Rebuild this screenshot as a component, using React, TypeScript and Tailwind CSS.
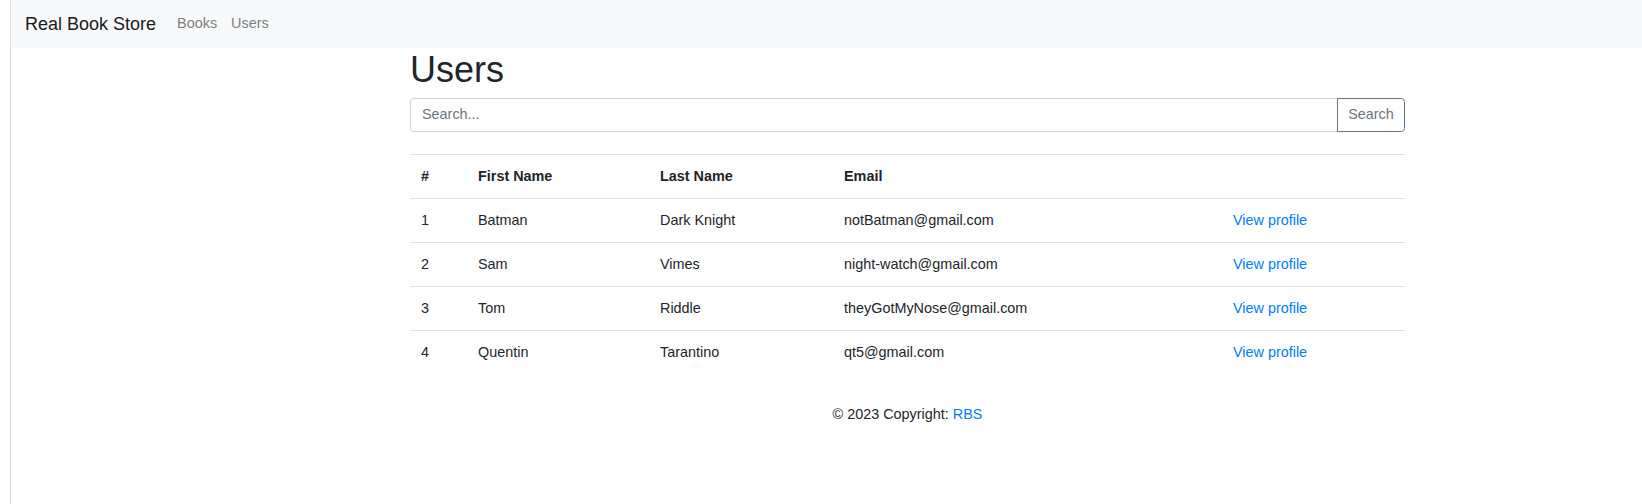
const users = [
    { id: 1, first: 'Batman', last: 'Dark Knight', email: 'notBatman@gmail.com' },
    { id: 2, first: 'Sam', last: 'Vimes', email: 'night-watch@gmail.com' },
    { id: 3, first: 'Tom', last: 'Riddle', email: 'theyGotMyNose@gmail.com' },
    { id: 4, first: 'Quentin', last: 'Tarantino', email: 'qt5@gmail.com' },
]

const Navbar = () => {
    return (
        <nav className="h-[48px] bg-[#f8f9fa] flex items-center pl-[14px]">
            <a className="text-[18px] text-[#1a1a1a] mr-[14px]">Real Book Store</a>
            <a className="text-[14.4px] text-[#808080] px-[7px]">Books</a>
            <a className="text-[14.4px] text-[#808080] px-[7px]">Users</a>
        </nav>
    )
}

const App = () => {
    return (
        <div
            className="flex min-h-[504px] bg-white text-[#212529]"
            style={{ fontFamily: '"Liberation Sans", Arial, sans-serif' }}
        >
            <div className="w-[11px] shrink-0 border-r border-[#dadada]"></div>
            <div className="flex-1">
                <Navbar />
                <div className="pl-[399px]">
                    <div className="w-[995px]">
                        <h1 className="text-[36px] leading-[43px] mb-[7px]">Users</h1>
                        <div className="flex h-[34px]">
                            <input
                                className="flex-1 border border-[#ced4da] rounded-l-[3.6px] px-[11px] text-[14.4px] placeholder:text-[#6c757d] outline-none"
                                placeholder="Search..."
                            />
                            <button className="w-[68px] border border-[#6c757d] rounded-r-[3.6px] text-[14.4px] text-[#6c757d] -ml-px">
                                Search
                            </button>
                        </div>
                        <table className="w-full table-fixed mt-[22px] text-[14.4px] border-collapse">
                            <thead>
                                <tr className="h-[44px] border-t border-b border-[#dee2e6] text-left">
                                    <th className="w-[57px] px-[11px] font-bold">#</th>
                                    <th className="w-[182px] px-[11px] font-bold">First Name</th>
                                    <th className="w-[184px] px-[11px] font-bold">Last Name</th>
                                    <th className="w-[389px] px-[11px] font-bold">Email</th>
                                    <th className="px-[11px]"></th>
                                </tr>
                            </thead>
                            <tbody>
                                {users.map((u, i) => (
                                    <tr
                                        key={u.id}
                                        className={
                                            i < users.length - 1
                                                ? 'h-[44px] border-b border-[#dee2e6]'
                                                : 'h-[44px]'
                                        }
                                    >
                                        <td className="px-[11px]">{u.id}</td>
                                        <td className="px-[11px]">{u.first}</td>
                                        <td className="px-[11px]">{u.last}</td>
                                        <td className="px-[11px]">{u.email}</td>
                                        <td className="px-[11px]">
                                            <a className="text-[#007bff]">View profile</a>
                                        </td>
                                    </tr>
                                ))}
                            </tbody>
                        </table>
                        <footer className="mt-[28px] text-center text-[14.4px] leading-[22px]">
                            © 2023 Copyright: <a className="text-[#007bff]">RBS</a>
                        </footer>
                    </div>
                </div>
            </div>
        </div>
    )
}

export default App
